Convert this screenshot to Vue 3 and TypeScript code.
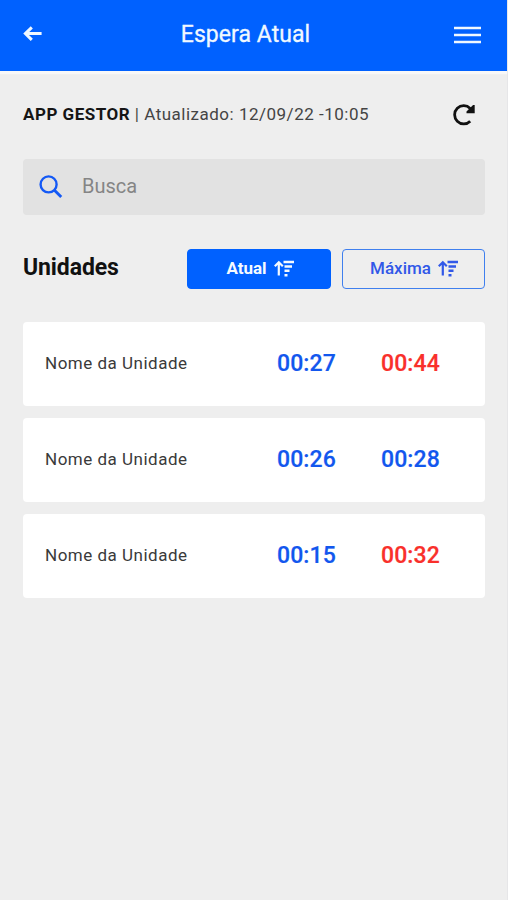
<script setup lang="ts">
import { ref, computed } from 'vue'

type SortKey = 'current' | 'maximum'

interface Unit {
  id: number
  name: string
  current: string
  maximum: string
}

const LIMIT_MINUTES = 30

const units: Unit[] = [
  { id: 1, name: 'Nome da Unidade', current: '00:27', maximum: '00:44' },
  { id: 2, name: 'Nome da Unidade', current: '00:26', maximum: '00:28' },
  { id: 3, name: 'Nome da Unidade', current: '00:15', maximum: '00:32' },
]

const sortOptions: { key: SortKey; label: string }[] = [
  { key: 'current', label: 'Atual' },
  { key: 'maximum', label: 'Máxima' },
]

const search = ref('')
const sortKey = ref<SortKey>('current')

const visibleUnits = computed(() =>
  units
    .filter((u) => u.name.toLowerCase().includes(search.value.toLowerCase()))
    .sort((a, b) => b[sortKey.value].localeCompare(a[sortKey.value])),
)

function isLate(time: string): boolean {
  const [h, m] = time.split(':').map(Number)
  return h * 60 + m > LIMIT_MINUTES
}
</script>

<template>
  <div class="screen">
    <header class="topbar">
      <button class="icon-button back" aria-label="Voltar">
        <svg width="20" height="18" viewBox="0 0 20 18">
          <path d="M8.8 1.4 2.4 7.6l6.400 6.200M3 7.600h15.600" fill="none" stroke="currentColor" stroke-width="3" />
        </svg>
      </button>
      <h1 class="title">Espera Atual</h1>
      <button class="icon-button" aria-label="Menu">
        <svg width="27" height="18" viewBox="0 0 27 18">
          <path d="M0 2h27M0 9h27M0 16h27" stroke="currentColor" stroke-width="2.7" />
        </svg>
      </button>
    </header>

    <main class="content">
      <div class="status">
        <p class="status-text"><strong>APP GESTOR</strong> | <span class="updated">Atualizado: 12/09/22 -10:05</span></p>
        <button class="icon-button refresh" aria-label="Atualizar">
          <svg width="24" height="22" viewBox="0 0 24 22">
            <path d="M18.2 17.2A9.1 9.1 0 1 1 18.2 4.4" fill="none" stroke="currentColor" stroke-width="2.8" />
            <path d="M22.7 1v8.200h-8.200v-1.600l6.600-6.600z" fill="currentColor" />
          </svg>
        </button>
      </div>

      <label class="search">
        <svg width="24" height="24" viewBox="0 0 24 24" fill="none" stroke="currentColor">
          <circle cx="9.6" cy="9.4" r="8" stroke-width="2.4" />
          <path d="m15.2 15 7 7" stroke-width="2.9" />
        </svg>
        <input v-model="search" class="search-input" type="text" placeholder="Busca" />
      </label>

      <div class="toolbar">
        <h2 class="subtitle">Unidades</h2>
        <div class="sorts">
          <button
            v-for="option in sortOptions"
            :key="option.key"
            class="sort"
            :class="[option.key, { active: sortKey === option.key }]"
            @click="sortKey = option.key"
          >
            <span>{{ option.label }}</span>
            <svg width="20" height="17" viewBox="0 0 20 17" fill="none" stroke="currentColor">
              <path d="M4.8 15.5V2.2M.8 6.2l4-4 4 4" stroke-width="2.2" />
              <path d="M9.5 2H20M10.500 6.400H18M10.500 10.800h5M10.500 15.200h3" stroke-width="2.5" />
            </svg>
          </button>
        </div>
      </div>

      <ul class="units">
        <li v-for="unit in visibleUnits" :key="unit.id" class="unit">
          <span class="unit-name">{{ unit.name }}</span>
          <span class="time" :class="{ late: isLate(unit.current) }">{{ unit.current }}</span>
          <span class="time" :class="{ late: isLate(unit.maximum) }">{{ unit.maximum }}</span>
        </li>
      </ul>
    </main>
  </div>
</template>

<style>
body {
  margin: 0;
  background: #eeeeee;
}
</style>

<style scoped>
.screen {
  box-sizing: border-box;
  min-height: 900px;
  border-right: 1px solid #e6e6e8;
  background: #eeeeee;
  color: #111;
  font-family: Roboto, 'Liberation Sans', sans-serif;
}

button {
  font: inherit;
  cursor: pointer;
}

.topbar {
  box-sizing: border-box;
  display: grid;
  grid-template-columns: 60px 1fr 60px;
  align-items: center;
  height: 71px;
  padding: 0 26px 2px 23px;
  background: #0061ff;
  color: #f0f8ff;
  box-shadow: 0 3px 1px #f8f8f8;
}

.topbar .icon-button {
  justify-self: end;
}

.topbar .back {
  justify-self: start;
}

.title {
  margin: 0;
  padding-right: 13px;
  text-align: center;
  white-space: nowrap;
  font-size: 23px;
  font-weight: 400;
  line-height: 28px;
  letter-spacing: 0.05px;
  -webkit-text-stroke: 0.3px currentColor;
}

.icon-button {
  display: flex;
  padding: 0;
  border: 0;
  background: none;
  color: inherit;
}

.content {
  padding: 27px 22px 0 23px;
}

.status {
  display: flex;
  align-items: center;
  justify-content: space-between;
  height: 34px;
  padding-right: 9px;
}

.status-text {
  margin: 0;
  padding-bottom: 2px;
  font-size: 17px;
  line-height: 24px;
  letter-spacing: 0.5px;
  color: #444;
}

.status-text strong {
  font-weight: 700;
  color: #151515;
}

.search {
  display: flex;
  align-items: center;
  gap: 19px;
  height: 56px;
  box-sizing: border-box;
  margin-top: 27px;
  padding: 0 16px;
  border-radius: 4px;
  background: #e2e2e2;
  color: #1459f5;
}

.search-input {
  flex: 1;
  min-width: 0;
  padding: 0 0 3px;
  border: 0;
  outline: 0;
  background: none;
  font: 400 20px/24px Roboto, 'Liberation Sans', sans-serif;
  letter-spacing: 0;
  color: #333;
}

.search-input::placeholder {
  color: #858585;
  opacity: 1;
}

.toolbar {
  display: flex;
  align-items: center;
  justify-content: space-between;
  margin-top: 34px;
}

.subtitle {
  margin: 0;
  padding-bottom: 2px;
  font-size: 23px;
  font-weight: 700;
  line-height: 28px;
  letter-spacing: -0.1px;
}

.sorts {
  display: grid;
  grid-template-columns: 144px 143px;
  gap: 11px;
}

.sort {
  box-sizing: border-box;
  display: flex;
  align-items: center;
  justify-content: center;
  gap: 7px;
  height: 40px;
  padding: 0 0 2px 1px;
  border: 1px solid #3f7fee;
  border-radius: 4px;
  background: transparent;
  color: #3158e8;
  font-size: 17px;
  font-weight: 500;
}

.sort.active {
  padding-left: 2px;
  border-color: #0061ff;
  background: #0061ff;
  color: #f4faff;
  font-weight: 700;
}

.units {
  display: grid;
  gap: 12px;
  margin: 33px 0 0;
  padding: 0;
  list-style: none;
}

.unit {
  box-sizing: border-box;
  display: grid;
  grid-template-columns: 1fr 104px 60px;
  align-items: center;
  height: 84px;
  padding: 0 44px 0 22px;
  border-radius: 4px;
  background: #fff;
}

.unit-name {
  padding-bottom: 2px;
  font-size: 17px;
  letter-spacing: 0.5px;
  color: #3a3a3a;
}

.time {
  padding-bottom: 2px;
  font-size: 23px;
  font-weight: 500;
  letter-spacing: 0.1px;
  color: #1257ee;
  -webkit-text-stroke: 0.2px currentColor;
}

.time.late {
  color: #f9302b;
}
</style>
